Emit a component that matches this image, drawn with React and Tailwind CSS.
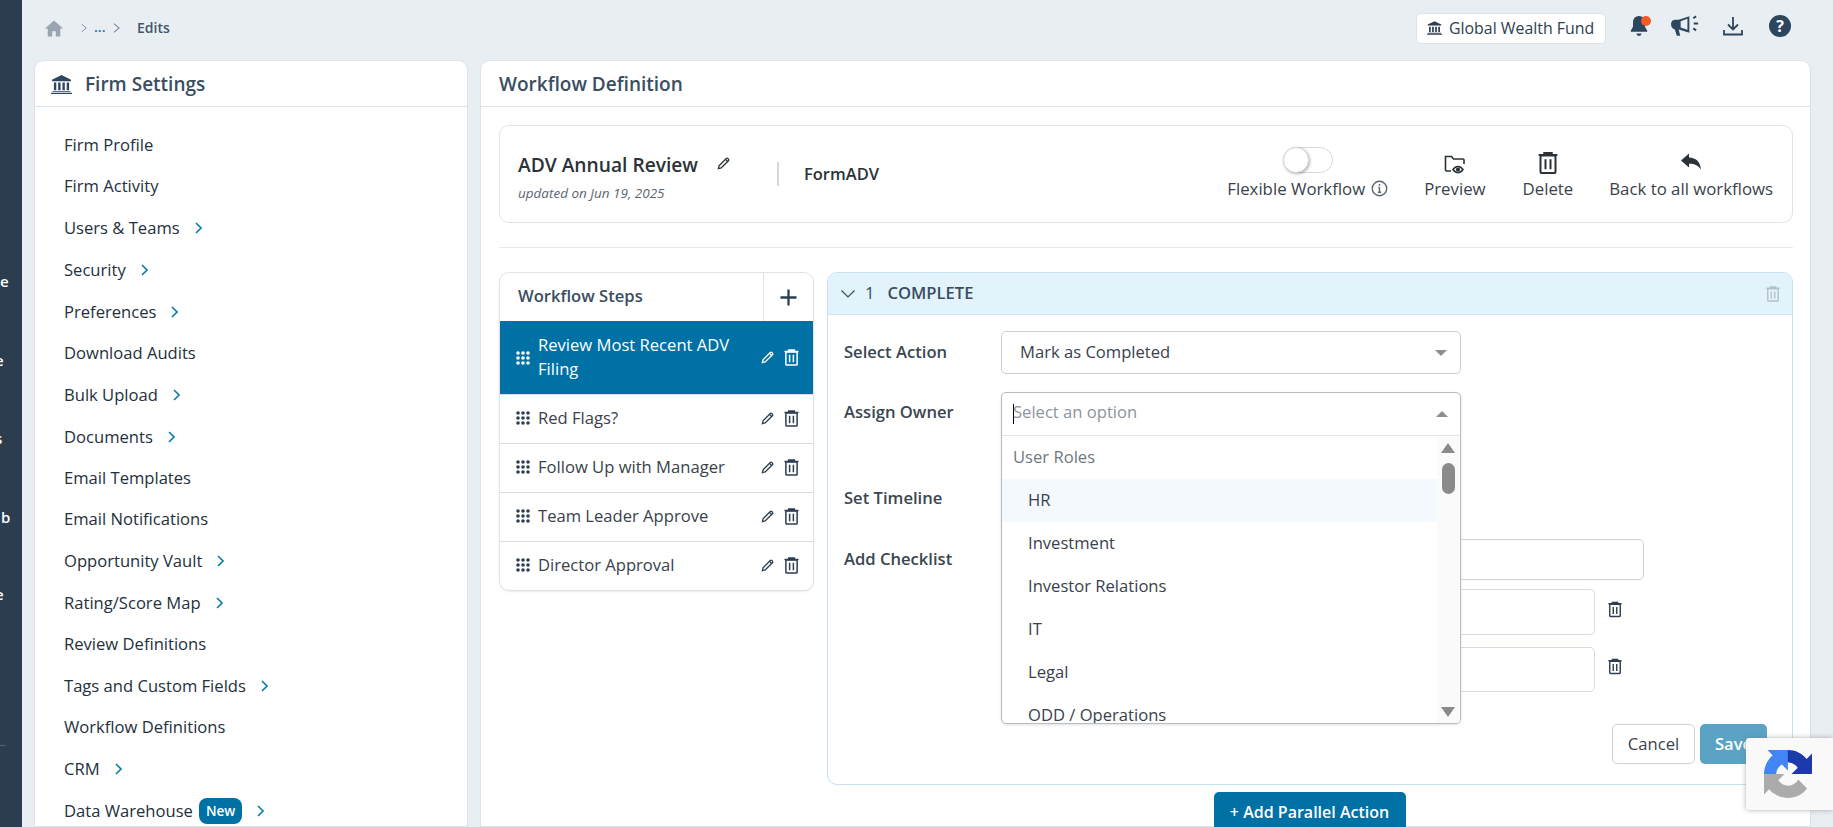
import React from "react";

const Chev = ({ className = "ml-[15px] w-[7px] h-[12px] text-[#0c7cae]" }) => (
  <svg viewBox="0 0 7 12" className={className} fill="none" stroke="currentColor" strokeWidth="1.6"><path d="M1 1l5 5-5 5" /></svg>
);
const Trash = ({ className = "w-[16px] h-[18px] text-[#2d3e50]" }) => (
  <svg viewBox="0 0 16 18" className={className} fill="none" stroke="currentColor" strokeWidth="1.6">
    <path d="M0.500 2.500h15M5 2.500V1h6v1.500" />
    <rect x="2" y="3" width="12" height="14" rx="0.8" />
    <path d="M6 6v8M10 6v8" />
  </svg>
);
const Pencil = ({ className = "w-[14px] h-[14px] text-[#2d3e50]" }) => (
  <svg viewBox="0 0 14 14" className={className} fill="none" stroke="currentColor" strokeWidth="1.4">
    <path d="M1.500 12.500l.7-3L10 1.700c.5-.5 1.200-.5 1.700 0l.6.6c.5.5.5 1.200 0 1.700L4.500 11.800z" />
    <path d="M9.200 2.600l2.200 2.200" />
  </svg>
);
const Grip = ({ color = "#2d3e50" }) => (
  <svg viewBox="0 0 14 14" className="w-[14px] h-[14px] shrink-0" fill={color}>
    {[2, 7, 12].map((y) => [2, 7, 12].map((x) => <circle key={`${x}-${y}`} cx={x} cy={y} r="1.800" />))}
  </svg>
);
const Bank = ({ className }) => (
  <svg viewBox="0 0 22 20" className={className} fill="currentColor">
    <path d="M11 0L1 5v1.500h20V5z" />
    <path d="M3 8h2.500v8H3zM7.500 8H10v8H7.500zM12 8h2.500v8H12zM16.500 8H19v8h-2.500z" />
    <path d="M1.500 17h19v1h-19zM0 18.600h22V20H0z" />
  </svg>
);

const nav = [
  ["Firm Profile", 0],
  ["Firm Activity", 0],
  ["Users & Teams", 1],
  ["Security", 1],
  ["Preferences", 1],
  ["Download Audits", 0],
  ["Bulk Upload", 1],
  ["Documents", 1],
  ["Email Templates", 0],
  ["Email Notifications", 0],
  ["Opportunity Vault", 1],
  ["Rating/Score Map", 1],
  ["Review Definitions", 0],
  ["Tags and Custom Fields", 1],
  ["Workflow Definitions", 0],
  ["CRM", 1],
];

const steps = ["Red Flags?", "Follow Up with Manager", "Team Leader Approve", "Director Approval"];
const options = ["HR", "Investment", "Investor Relations", "IT", "Legal", "ODD / Operations"];

export default function App() {
  return (
    <div className="relative flex h-[827px] w-[1833px] overflow-hidden bg-[#e9eef3] font-['Open_Sans',sans-serif] text-[#2d3e50]">
      {/* dark rail */}
      <aside className="relative w-[22px] shrink-0 overflow-hidden bg-[#2b3d4f] text-[15px] font-semibold text-white">
        <span className="absolute left-[0px] top-[270px]">e</span>
        <span className="absolute left-[-5px] top-[349px]">e</span>
        <span className="absolute left-[-5px] top-[427px]">s</span>
        <span className="absolute left-[1px] top-[506px]">b</span>
        <span className="absolute left-[-5px] top-[583px]">e</span>
        <span className="absolute left-0 top-[745px] h-px w-[6px] bg-[#55636f]" />
      </aside>

      <div className="flex min-w-0 flex-1 flex-col">
        {/* top bar */}
        <header className="flex h-[60px] shrink-0 items-center justify-between pb-[4px] pl-[23px] pr-[42px]">
          <div className="flex items-center">
            <svg viewBox="0 0 20 18" className="w-[18px] h-[17px] text-[#98a5b1]" fill="currentColor"><path d="M10 0L0 9h3v9h5v-6h4v6h5V9h3z" /></svg>
            <svg viewBox="0 0 8 12" className="ml-[18px] w-[6px] h-[12px] text-[#7d8a97]" fill="none" stroke="currentColor" strokeWidth="1.200"><path d="M1 1l6 5-6 5" /></svg>
            <span className="ml-[7px] mt-[-3px] w-[11px] text-[14px] font-semibold text-[#0c7cae]">...</span>
            <svg viewBox="0 0 8 12" className="ml-[8px] w-[7px] h-[12px] text-[#7d8a97]" fill="none" stroke="currentColor" strokeWidth="1.200"><path d="M1 1l6 5-6 5" /></svg>
            <span className="ml-[17px] mt-[-2px] text-[14px] font-semibold text-[#44576a]">Edits</span>
          </div>
          <div className="flex items-center">
            <div className="flex h-[31px] w-[190px] items-center rounded-[5px] border border-[#dde2e7] bg-white pl-[10px] text-[15.9px]">
              <Bank className="w-[15px] h-[14px] text-[#2d3e50]" />
              <span className="ml-[7px] mt-[1px] whitespace-nowrap">Global Wealth Fund</span>
            </div>
            <div className="relative ml-[24px] mt-[-4px]">
              <svg viewBox="0 0 18 22" className="block w-[18px] h-[22px] text-[#2d4660]" fill="currentColor"><path d="M9 1c-3.600 0-6 2.800-6 6.500v4.200L.8 15.500v1.300h16.400v-1.300L15 11.700V7.500C15 3.800 12.600 1 9 1zM6.500 18.500a2.500 2.500 0 005 0z" /></svg>
              <span className="absolute right-[-3px] top-[1px] h-[10px] w-[10px] rounded-full bg-[#f15a29]" />
            </div>
            <svg viewBox="0 0 30 22" className="ml-[23px] mt-[-4px] w-[29px] h-[22px] text-[#2d4660]" fill="currentColor">
              <path d="M0 9c0-3 2-4.500 4.500-4.500H8l11-3.500v17L8 14.500l1.500 6.500H6l-2-6.500C1.500 14 0 12 0 9z" />
              <path d="M10 6L17 3.500v11.500L10 12.500z" fill="#e9eef3" />
              <path d="M23 3l3-2M23.500 8.500H28M23 13.500l3 2" fill="none" stroke="currentColor" strokeWidth="2" />
            </svg>
            <svg viewBox="0 0 20 20" className="ml-[23px] mt-[-4px] w-[20px] h-[20px] text-[#2d4660]" fill="none" stroke="currentColor" strokeWidth="1.800"><path d="M10 1v12M5 8.500l5 5 5-5M1 14v4.500h18V14" /></svg>
            <div className="ml-[26px] mt-[-4px] flex h-[22px] w-[22px] items-center justify-center rounded-full bg-[#2d4660] text-[16px] font-bold leading-none text-white">?</div>
          </div>
        </header>

        <div className="flex min-h-0 flex-1 gap-[12px] pl-[12px] pr-[22px]">
          {/* left panel */}
          <section className="w-[434px] shrink-0 rounded-t-[10px] border border-[#dfe3e7] bg-white">
            <div className="flex h-[46px] items-center border-b border-[#dfe3e7] pl-[16px] pt-[1px] text-[19px] font-semibold text-[#3a4d61]">
              <Bank className="w-[21px] h-[19px] text-[#2d4660]" />
              <span className="ml-[13px]">Firm Settings</span>
            </div>
            <nav className="pl-[29px] pt-[18px] text-[16.6px] text-[#24303c]">
              {nav.map(([label, arrow]) => (
                <div key={label} className={`flex items-center ${arrow ? "h-[42px]" : "h-[41px]"}`}>
                  <span>{label}</span>
                  {arrow ? <Chev /> : null}
                </div>
              ))}
              <div className="flex h-[42px] items-center">
                <span>Data Warehouse</span>
                <span className="ml-[6px] rounded-[8px] bg-[#0071a4] px-[7px] py-[2px] text-[13.5px] font-semibold leading-[22px] text-white">New</span>
                <Chev />
              </div>
            </nav>
          </section>

          {/* right panel */}
          <section className="relative min-w-0 flex-1 rounded-t-[10px] border border-[#dfe3e7] bg-white">
            <div className="flex h-[46px] items-center border-b border-[#dfe3e7] pl-[18px] pt-[1px] text-[19px] font-semibold text-[#3a4d61]">Workflow Definition</div>
            <div className="pl-[18px] pr-[17px] pt-[18px]">
              {/* header card */}
              <div className="flex h-[98px] items-center rounded-[10px] border border-[#dfe3e7] pl-[18px] pr-[19px]">
                <div className="w-[259px] shrink-0 pt-[6px]">
                  <div className="flex items-center">
                    <span className="text-[19.2px] font-semibold text-[#2b3238]">ADV Annual Review</span>
                    <Pencil className="ml-[19px] mt-[-4px] w-[13px] h-[13px] text-[#2b3238]" />
                  </div>
                  <div className="mt-[3px] text-[13.5px] italic text-[#5b6570]">updated on Jun 19, 2025</div>
                </div>
                <div className="h-[24px] w-[2px] bg-[#d6d9dc]" />
                <div className="ml-[25px] text-[16.5px] font-semibold text-[#2b3238]">FormADV</div>
                <div className="ml-auto flex items-end text-[16.8px] text-[#39424b]">
                  <div className="flex flex-col items-center">
                    <span className="mb-[3px] h-[26px] w-[50px] rounded-full border border-[#d5d9dd] bg-white">
                      <span className="-mt-px -ml-px block h-[26px] w-[26px] rounded-full border border-[#d5d9dd] bg-white shadow-[1px_1px_3px_rgba(0,0,0,0.3)]" />
                    </span>
                    <span className="flex items-center whitespace-nowrap">Flexible Workflow
                      <svg viewBox="0 0 16 16" className="ml-[6px] w-[17px] h-[17px] text-[#5a6570]" fill="none" stroke="currentColor" strokeWidth="1.300"><circle cx="8" cy="8" r="6.800" /><path d="M8 7v4.500M6.500 11.500h3M6.800 7H8" /><circle cx="8" cy="4.600" r="0.9" fill="currentColor" stroke="none" /></svg>
                    </span>
                  </div>
                  <div className="ml-[36px] flex flex-col items-center">
                    <svg viewBox="0 0 22 22" className="mb-[1px] w-[22px] h-[22px] text-[#2b3238]" fill="none" stroke="currentColor" strokeWidth="1.600">
                      <path d="M7 18H2.500a1 1 0 01-1-1V3.500h6l2 2.500h9.500a1 1 0 011 1v4" />
                      <path d="M9 16.500c1.500-2.200 3.200-3 5-3s3.500.8 5 3c-1.500 2.200-3.200 3-5 3s-3.500-.8-5-3z" />
                      <circle cx="14" cy="16.500" r="1.300" fill="currentColor" />
                    </svg>
                    <span>Preview</span>
                  </div>
                  <div className="ml-[37px] flex flex-col items-center">
                    <Trash className="mb-[1px] w-[20px] h-[24px] text-[#2b3238]" />
                    <span>Delete</span>
                  </div>
                  <div className="ml-[36px] flex flex-col items-center">
                    <svg viewBox="0 0 20 16" className="mb-[6px] w-[20px] h-[17px] text-[#2b3238]" fill="currentColor"><path d="M0 7L8 0v4c7 .3 11 4 12 12-2.500-4-6-5.800-12-5.800V14z" /></svg>
                    <span className="whitespace-nowrap">Back to all workflows</span>
                  </div>
                </div>
              </div>

              <div className="mt-[24px] h-px bg-[#e8eaed]" />

              <div className="mt-[24px] flex items-start gap-[13px]">
                {/* steps */}
                <div className="w-[315px] shrink-0 overflow-hidden rounded-[10px] border border-[#dfe3e7] shadow-[0_1px_2px_rgba(0,0,0,0.08)]">
                  <div className="flex h-[48px] items-center">
                    <div className="flex h-full w-[264px] items-center border-r border-[#dfe3e7] pb-[1px] pl-[18px] text-[16.6px] font-semibold text-[#3a4d61]">Workflow Steps</div>
                    <div className="flex flex-1 justify-center">
                      <svg viewBox="0 0 18 18" className="w-[17px] h-[17px] text-[#2d3e50]" fill="none" stroke="currentColor" strokeWidth="2.400"><path d="M9 0.500v17M0.500 9h17" /></svg>
                    </div>
                  </div>
                  <div className="flex h-[73px] items-center bg-[#0071a4] pl-[16px] pr-[14px] text-[16.6px] leading-[24px] text-white">
                    <Grip color="#ffffff" />
                    <span className="ml-[8px] flex-1 pb-[1px]">Review Most Recent ADV Filing</span>
                    <Pencil className="ml-[16px] w-[13px] h-[13px] shrink-0 text-white" />
                    <Trash className="ml-[10px] w-[15px] h-[17px] shrink-0 text-white" />
                  </div>
                  {steps.map((s) => (
                    <div key={s} className="flex h-[49px] items-center border-t border-[#d9dde1] pb-[2px] pl-[16px] pr-[14px] text-[16.6px] text-[#39424b]">
                      <Grip />
                      <span className="ml-[8px] flex-1">{s}</span>
                      <Pencil className="w-[13px] h-[13px] text-[#2d3e50]" />
                      <Trash className="ml-[10px] w-[15px] h-[17px] text-[#2d3e50]" />
                    </div>
                  ))}
                </div>

                {/* action panel */}
                <div className="min-w-0 flex-1">
                  <div className="h-[513px] overflow-hidden rounded-[10px] border border-[#c6e1f0]">
                    <div className="flex h-[42px] items-center border-b border-[#d3e5f0] bg-[#e2f3fc] pl-[13px] pr-[12px] text-[16.6px] font-semibold text-[#3a4d61]">
                      <svg viewBox="0 0 14 8" className="w-[14px] h-[8px] text-[#3a4d61]" fill="none" stroke="currentColor" strokeWidth="1.200"><path d="M0.500 0.500L7 7l6.500-6.500" /></svg>
                      <span className="ml-[10px] font-normal">1</span>
                      <span className="ml-[13px]">COMPLETE</span>
                      <Trash className="ml-auto w-[14px] h-[16px] text-[#b3c2cc]" />
                    </div>
                    <div className="pl-[16px] text-[16.6px]">
                      <div className="mt-[16px] flex h-[43px] items-center">
                        <span className="w-[157px] font-semibold text-[#3a4650]">Select Action</span>
                        <div className="flex h-[43px] w-[460px] items-center justify-between rounded-[5px] border border-[#c9cdd1] pl-[18px] pr-[13px] text-[#39424b]">
                          <span>Mark as Completed</span>
                          <span className="h-0 w-0 border-x-[6px] border-t-[6px] border-x-transparent border-t-[#8a8f94]" />
                        </div>
                      </div>
                      <div className="mt-[19px] flex h-[43px] items-center pb-[4px]">
                        <span className="w-[157px] font-semibold text-[#3a4650]">Assign Owner</span>
                      </div>
                      <div className="mt-[40px] flex h-[44px] items-center font-semibold text-[#3a4650]">Set Timeline</div>
                      <div className="mt-[19px] flex h-[41px] items-center">
                        <span className="w-[157px] font-semibold text-[#3a4650]">Add Checklist</span>
                        <div className="h-[41px] w-[643px] rounded-[5px] border border-[#cfd2d6]" />
                      </div>
                      <div className="ml-[157px] mt-[9px] flex items-center">
                        <div className="h-[46px] w-[594px] rounded-[5px] border border-[#d8dae4]" />
                        <Trash className="ml-[13px] mt-[-5px] w-[14px] h-[17px] text-[#2d3e50]" />
                      </div>
                      <div className="ml-[157px] mt-[12px] flex items-center">
                        <div className="h-[45px] w-[594px] rounded-[5px] border border-[#d8dae4]" />
                        <Trash className="ml-[13px] mt-[-6px] w-[14px] h-[17px] text-[#2d3e50]" />
                      </div>
                      <div className="mt-[32px] flex justify-end pr-[25px]">
                        <button className="h-[40px] w-[83px] rounded-[5px] border border-[#cfd2d6] bg-white text-[#39424b]">Cancel</button>
                        <button className="ml-[5px] h-[40px] w-[67px] rounded-[5px] bg-[#5aa3c4] pl-[15px] text-left font-semibold text-white">Save</button>
                      </div>
                    </div>
                  </div>
                  <div className="mt-[7px] flex justify-center pr-[1px]">
                    <button className="h-[40px] w-[192px] rounded-[5px] bg-[#0071a4] text-[16px] font-semibold text-white">+ Add Parallel Action</button>
                  </div>
                </div>
              </div>
            </div>

            {/* open dropdown */}
            <div className="absolute left-[520px] top-[331px] z-10 w-[460px] overflow-hidden rounded-[5px] border border-[#b9bcc0] bg-white shadow-[0_1px_3px_rgba(0,0,0,0.12)]">
              <div className="relative flex h-[43px] items-center justify-between border-b border-[#e2e4e6] pb-[4px] pl-[11px] pr-[12px] text-[16.6px] text-[#8d949b]">
                <span className="flex h-[22px] items-center"><span className="mr-[-1px] mt-[4px] h-[20px] w-px bg-black" />Select an option</span>
                <span className="mt-[4px] h-0 w-0 border-x-[6px] border-b-[6px] border-x-transparent border-b-[#8a8f94]" />
              </div>
              <div className="relative h-[287px] overflow-hidden text-[16.6px]">
                <div className="flex h-[43px] items-center pl-[11px] text-[#6f7880]">User Roles</div>
                {options.map((o, i) => (
                  <div key={o} className={`mr-[23px] flex h-[43px] items-center pl-[26px] text-[#39424b] ${i === 0 ? "bg-[#f4f9fd]" : ""}`}>{o}</div>
                ))}
                <div className="absolute bottom-0 right-0 top-0 w-[23px] bg-[#fafafa]">
                  <span className="absolute left-[4px] top-[7px] h-0 w-0 border-x-[7px] border-b-[10px] border-x-transparent border-b-[#8a8a8a]" />
                  <span className="absolute left-[5px] top-[27px] h-[31px] w-[13px] rounded-full bg-[#8a8a8a]" />
                  <span className="absolute bottom-[6px] left-[4px] h-0 w-0 border-x-[7px] border-t-[10px] border-x-transparent border-t-[#8a8a8a]" />
                </div>
              </div>
            </div>
          </section>
        </div>
      </div>

      {/* recaptcha badge */}
      <div className="absolute left-[1746px] top-[738px] z-20 flex h-[72px] w-[87px] items-center rounded-l-[3px] bg-[#f9f9f9] pl-[18px] shadow-[0_0_5px_rgba(120,120,120,0.6)]">
        <svg viewBox="0 0 64 64" className="h-[48px] w-[48px]">
          <path fill="#1c3aa9" d="M64 31.955l-.033-1.37V4.687l-7.16 7.16C50.948 4.674 42.033.093 32.05.093c-10.4 0-19.622 4.96-25.458 12.64l11.736 11.86a15.55 15.55 0 014.754-5.334c2.05-1.6 4.952-2.906 8.968-2.906.485 0 .86.057 1.135.163 4.976.393 9.288 3.14 11.828 7.124l-8.307 8.307c10.522-.04 22.41-.066 27.295.005" />
          <path fill="#4285f4" d="M31.862.094l-1.37.033H4.594l7.16 7.16C4.58 13.147 0 22.06 0 32.046c0 10.4 4.96 19.622 12.64 25.458L24.5 45.768a15.55 15.55 0 01-5.334-4.754c-1.6-2.05-2.906-4.952-2.906-8.968 0-.485.057-.86.163-1.135.393-4.976 3.14-9.288 7.124-11.828l8.307 8.307c-.04-10.522-.066-22.41.005-27.295" />
          <path fill="#ababab" d="M.001 32.045l.033 1.37v25.898l7.16-7.16c5.86 7.173 14.774 11.754 24.76 11.754 10.4 0 19.622-4.96 25.458-12.64l-11.736-11.86a15.55 15.55 0 01-4.754 5.334c-2.05 1.6-4.952 2.906-8.968 2.906-.485 0-.86-.057-1.135-.163-4.976-.393-9.288-3.14-11.828-7.124l8.307-8.307c-10.522.04-22.41.066-27.295-.005" />
        </svg>
      </div>
    </div>
  );
}
